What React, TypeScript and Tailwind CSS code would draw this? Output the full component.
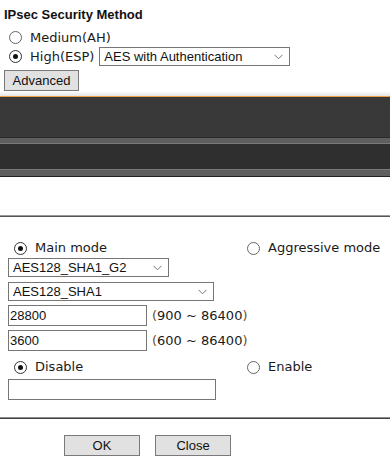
const label = "font-['DejaVu_Sans','Verdana',sans-serif] text-[13px] text-[#1a1a1a]";
const arial = "font-['Liberation_Sans',Arial,sans-serif] text-[13px] text-[#111]";

function Radio({ checked }: { checked?: boolean }) {
  return (
    <span
      className={`inline-flex h-[13px] w-[13px] shrink-0 items-center justify-center rounded-full border bg-white ${
        checked ? "border-[#333]" : "border-[#666]"
      }`}
    >
      {checked && <span className="h-[5px] w-[5px] rounded-full bg-[#111]" />}
    </span>
  );
}

function Select({ value, width }: { value: string; width: string }) {
  return (
    <div
      className={`${width} ${arial} flex h-[19px] items-center justify-between border border-[#767676] bg-white pl-[4px] pr-[6px] leading-none`}
    >
      <span>{value}</span>
      <svg width="9" height="6" viewBox="0 0 9 6" className="shrink-0">
        <polyline points="0.5,0.8 4.5,4.8 8.5,0.8" fill="none" stroke="#777" strokeWidth="1" />
      </svg>
    </div>
  );
}

function Field({ value, width }: { value: string; width: string }) {
  return (
    <input
      readOnly
      defaultValue={value}
      className={`${width} ${arial} block h-[21px] border border-[#767676] bg-white px-[1px] outline-none`}
    />
  );
}

function Range({ text }: { text: string }) {
  return (
    <span className={`${label} ml-[5px]`}>
      <span className="text-[#7a4a12]">(</span>
      {text}
      <span className="text-[#7a4a12]">)</span>
    </span>
  );
}

function Btn({ children, className = "" }: { children: React.ReactNode; className?: string }) {
  return (
    <button
      className={`${arial} flex h-[21px] items-center justify-center border border-[#7a7a7a] bg-[#e1e1e1] leading-none ${className}`}
    >
      {children}
    </button>
  );
}

export default function App() {
  return (
    <div className="h-[464px] w-[390px] overflow-hidden bg-white">
      {/* IPsec security method */}
      <div className="pl-[4px] pt-[7px]">
        <div className="h-[16px] font-['Liberation_Sans',Arial,sans-serif] text-[13px] font-bold leading-[16px] text-[#111]">
          IPsec Security Method
        </div>
        <div className="mt-[5px] flex h-[19px] items-center gap-[8px] pl-[5px]">
          <Radio />
          <span className={label}>Medium(AH)</span>
        </div>
        <div className="flex h-[19px] items-center pl-[5px]">
          <Radio checked />
          <span className={`${label} ml-[8px]`}>High(ESP)</span>
          <div className="ml-[5px]">
            <Select value="AES with Authentication" width="w-[191px]" />
          </div>
        </div>
        <Btn className="mt-[4px] w-[75px]">Advanced</Btn>
      </div>

      {/* dark header bands */}
      <div className="h-[5px] bg-gradient-to-b from-white to-[#e6e6e6]" />
      <div className="h-px bg-[#eca043]" />
      <div className="h-[40px] bg-[#393939]" />
      <div className="h-px bg-[#2a2a2a]" />
      <div className="h-[5px] bg-[#5f5f5f]" />
      <div className="h-px bg-[#7a7a7a]" />
      <div className="h-[25px] bg-[#2e2f2e]" />
      <div className="h-px bg-[#7a7a7a]" />
      <div className="h-[6px] bg-[#5f5f5f]" />
      <div className="h-px bg-[#222]" />

      <div className="h-[38px]" />
      <div className="h-px bg-[#9a9a9a]" />
      <div className="h-px bg-[#555]" />

      {/* phase settings */}
      <div className="pl-[8px]">
        <div className="mt-[21px] flex h-[20px] items-center">
          <div className="flex w-[239px] items-center gap-[8px] pl-[6px]">
            <Radio checked />
            <span className={label}>Main mode</span>
          </div>
          <div className="flex items-center gap-[8px]">
            <Radio />
            <span className={label}>Aggressive mode</span>
          </div>
        </div>
        <Select value="AES128_SHA1_G2" width="w-[161px]" />
        <div className="mt-[5px]">
          <Select value="AES128_SHA1" width="w-[206px]" />
        </div>
        <div className="mt-[4px] flex items-center">
          <Field value="28800" width="w-[139px]" />
          <Range text="900 ~ 86400" />
        </div>
        <div className="mt-[4px] flex items-center">
          <Field value="3600" width="w-[139px]" />
          <Range text="600 ~ 86400" />
        </div>
        <div className="mt-[6px] flex h-[20px] items-center">
          <div className="flex w-[239px] items-center gap-[8px] pl-[6px]">
            <Radio checked />
            <span className={label}>Disable</span>
          </div>
          <div className="flex items-center gap-[8px]">
            <Radio />
            <span className={label}>Enable</span>
          </div>
        </div>
        <div className="mt-[2px]">
          <Field value="" width="w-[208px]" />
        </div>
      </div>

      <div className="mt-[17px] h-px bg-[#8a8a8a]" />
      <div className="h-px bg-[#444]" />

      <div className="mt-[16px] flex gap-[15px] pl-[64px]">
        <Btn className="w-[76px]">OK</Btn>
        <Btn className="w-[76px]">Close</Btn>
      </div>
    </div>
  );
}
